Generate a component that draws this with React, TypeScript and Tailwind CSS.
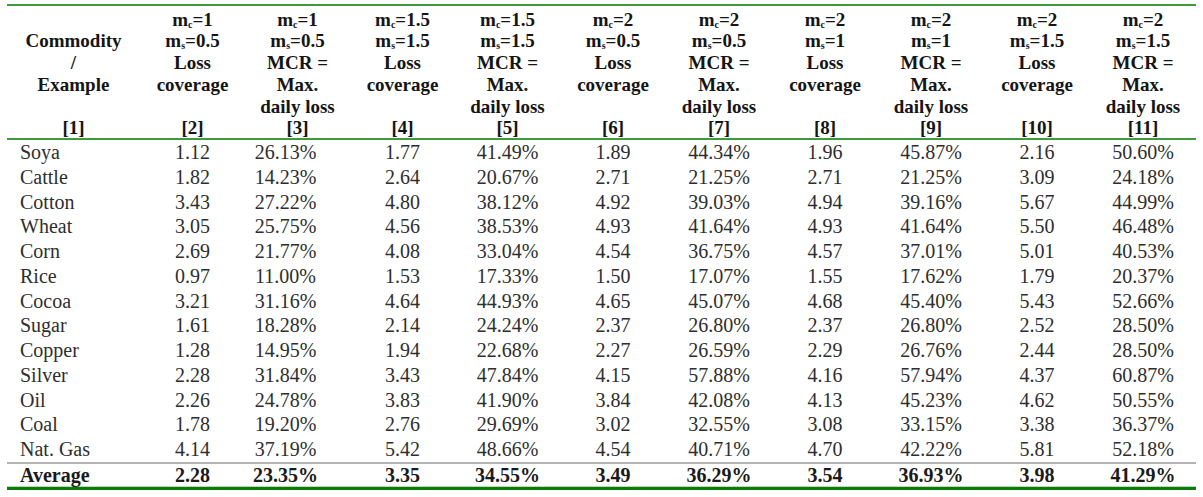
import React from "react";

const cols =
  "grid grid-cols-[133px_105px_105px_105px_105px_106px_106px_106px_106px_106px_106px]";

type Hdr = { mc: string; ms: string; kind: "loss" | "mcr"; n: number };

const headers: Hdr[] = [
  { mc: "1", ms: "0.5", kind: "loss", n: 2 },
  { mc: "1", ms: "0.5", kind: "mcr", n: 3 },
  { mc: "1.5", ms: "1.5", kind: "loss", n: 4 },
  { mc: "1.5", ms: "1.5", kind: "mcr", n: 5 },
  { mc: "2", ms: "0.5", kind: "loss", n: 6 },
  { mc: "2", ms: "0.5", kind: "mcr", n: 7 },
  { mc: "2", ms: "1", kind: "loss", n: 8 },
  { mc: "2", ms: "1", kind: "mcr", n: 9 },
  { mc: "2", ms: "1.5", kind: "loss", n: 10 },
  { mc: "2", ms: "1.5", kind: "mcr", n: 11 },
];

const rows: string[][] = [
  ["Soya", "1.12", "26.13%", "1.77", "41.49%", "1.89", "44.34%", "1.96", "45.87%", "2.16", "50.60%"],
  ["Cattle", "1.82", "14.23%", "2.64", "20.67%", "2.71", "21.25%", "2.71", "21.25%", "3.09", "24.18%"],
  ["Cotton", "3.43", "27.22%", "4.80", "38.12%", "4.92", "39.03%", "4.94", "39.16%", "5.67", "44.99%"],
  ["Wheat", "3.05", "25.75%", "4.56", "38.53%", "4.93", "41.64%", "4.93", "41.64%", "5.50", "46.48%"],
  ["Corn", "2.69", "21.77%", "4.08", "33.04%", "4.54", "36.75%", "4.57", "37.01%", "5.01", "40.53%"],
  ["Rice", "0.97", "11.00%", "1.53", "17.33%", "1.50", "17.07%", "1.55", "17.62%", "1.79", "20.37%"],
  ["Cocoa", "3.21", "31.16%", "4.64", "44.93%", "4.65", "45.07%", "4.68", "45.40%", "5.43", "52.66%"],
  ["Sugar", "1.61", "18.28%", "2.14", "24.24%", "2.37", "26.80%", "2.37", "26.80%", "2.52", "28.50%"],
  ["Copper", "1.28", "14.95%", "1.94", "22.68%", "2.27", "26.59%", "2.29", "26.76%", "2.44", "28.50%"],
  ["Silver", "2.28", "31.84%", "3.43", "47.84%", "4.15", "57.88%", "4.16", "57.94%", "4.37", "60.87%"],
  ["Oil", "2.26", "24.78%", "3.83", "41.90%", "3.84", "42.08%", "4.13", "45.23%", "4.62", "50.55%"],
  ["Coal", "1.78", "19.20%", "2.76", "29.69%", "3.02", "32.55%", "3.08", "33.15%", "3.38", "36.37%"],
  ["Nat. Gas", "4.14", "37.19%", "5.42", "48.66%", "4.54", "40.71%", "4.70", "42.22%", "5.81", "52.18%"],
];

const avg = ["Average", "2.28", "23.35%", "3.35", "34.55%", "3.49", "36.29%", "3.54", "36.93%", "3.98", "41.29%"];

function Line({ children }: { children?: React.ReactNode }) {
  return <div className="h-[21.8px] leading-[21.8px] whitespace-nowrap">{children}</div>;
}

function M({ sub, val }: { sub: string; val: string }) {
  return (
    <Line>
      m<sub className="text-[10px] relative top-[2px] align-baseline">{sub}</sub>={val}
    </Line>
  );
}

function HeaderCell({ h }: { h: Hdr }) {
  return (
    <div className="flex flex-col items-center text-center">
      <M sub="c" val={h.mc} />
      <M sub="s" val={h.ms} />
      {h.kind === "loss" ? (
        <>
          <Line>Loss</Line>
          <Line>coverage</Line>
          <Line />
        </>
      ) : (
        <>
          <Line>MCR =</Line>
          <Line>Max.</Line>
          <Line>daily loss</Line>
        </>
      )}
      <Line>[{h.n}]</Line>
    </div>
  );
}

function Cell({ v, i }: { v: string; i: number }) {
  if (i === 0) return <div className="pl-[13px] whitespace-nowrap">{v}</div>;
  return <div className={`text-center ${i === 2 ? "pr-6" : ""}`}>{v}</div>;
}

export default function App() {
  return (
    <div className="w-[1203px] h-[497px] bg-white font-['Liberation_Serif',serif] overflow-hidden">
      <div className="ml-[7px] w-[1189px] pt-[4px]">
        <div className="h-[2px] bg-[#3c9c3c]" />
        {/* header */}
        <div className={`${cols} pt-[2.5px] text-[19px] font-bold text-[#151515] h-[132px]`}>
          <div className="flex flex-col items-center text-center">
            <Line />
            <Line>Commodity</Line>
            <Line>/</Line>
            <Line>Example</Line>
            <Line />
            <Line>[1]</Line>
          </div>
          {headers.map((h) => (
            <HeaderCell key={h.n} h={h} />
          ))}
        </div>
        <div className="h-[2px] bg-[#3c9c3c]" />
        {/* body */}
        <div className="text-[20px] text-[#2e2e2e]">
          {rows.map((r) => (
            <div key={r[0]} className={`${cols} h-[24.75px] leading-[24px]`}>
              {r.map((v, i) => (
                <Cell key={i} v={v} i={i} />
              ))}
            </div>
          ))}
        </div>
        <div className="h-[2px] bg-[#b4b4b4]" />
        <div className={`${cols} h-[22px] leading-[22px] text-[20px] font-bold text-[#1a1a1a]`}>
          {avg.map((v, i) => (
            <Cell key={i} v={v} i={i} />
          ))}
        </div>
        <div className="h-px bg-[#b8dcb8]" />
        <div className="h-[3px] bg-[#0a7a0a]" />
      </div>
    </div>
  );
}
